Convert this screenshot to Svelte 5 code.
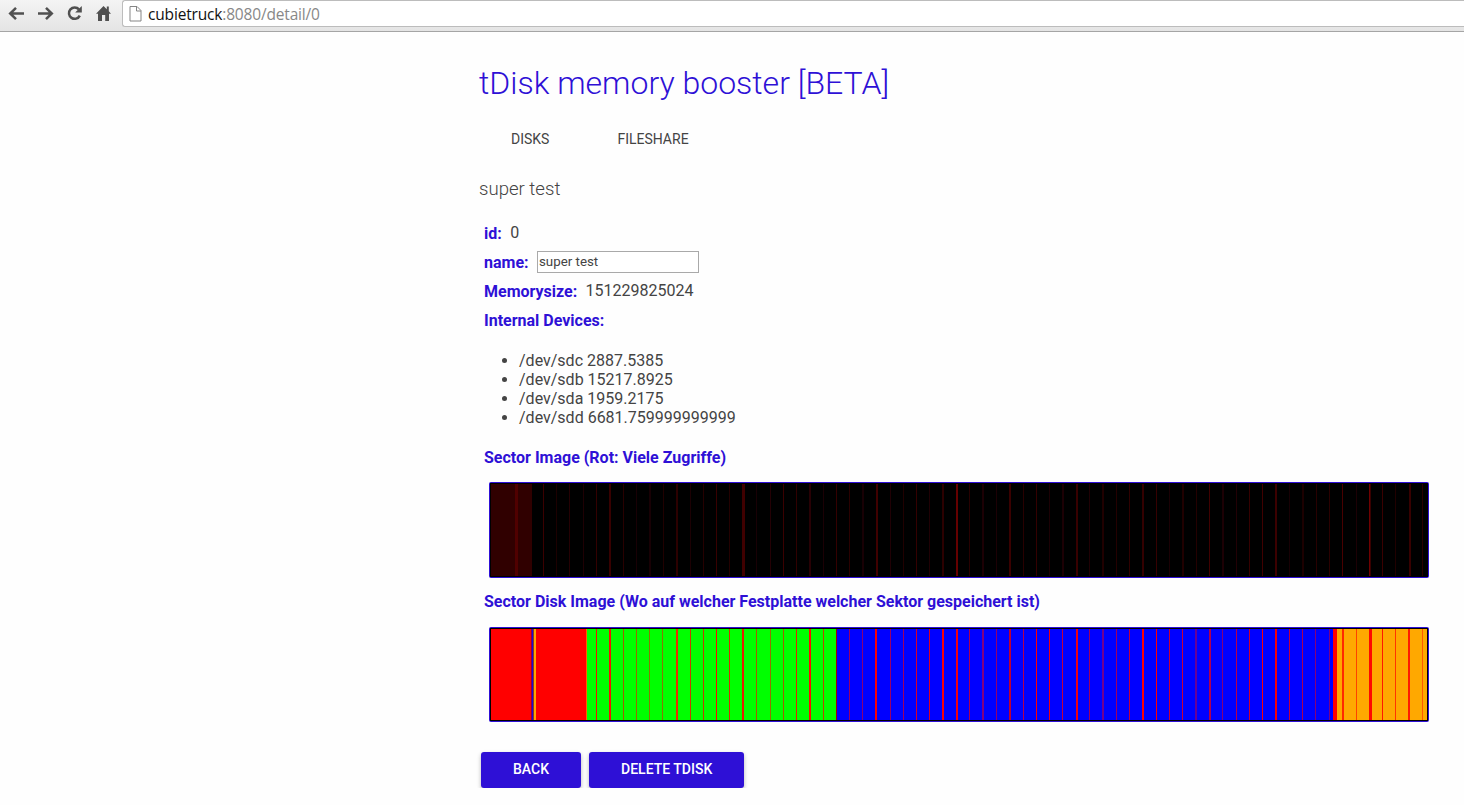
<script>
  let name = $state('super test');
  const devices = [
    '/dev/sdc 2887.5385',
    '/dev/sdb 15217.8925',
    '/dev/sda 1959.2175',
    '/dev/sdd 6681.759999999999',
  ];

  // [x, width, colour] in chart units
  const access = [
    [2, 41, '#300000'], [26, 3, '#500000'], [54, 1, '#3b0000'], [67, 1, '#1c0000'],
    [80, 1, '#250003'], [94, 1, '#1e0003'], [107, 1, '#330000'], [120, 2, '#380000'],
    [134, 1, '#280000'], [147, 1, '#180004'], [160, 2, '#180004'], [174, 1, '#200000'],
    [187, 2, '#2c0000'], [201, 1, '#1c0003'], [214, 1, '#250000'], [227, 1, '#380000'],
    [240, 1, '#240000'], [253, 3, '#400000'], [267, 1, '#180004'], [281, 1, '#240004'],
    [294, 1, '#3a0000'], [307, 1, '#300000'], [320, 2, '#280004'], [334, 1, '#1b0004'],
    [347, 1, '#340000'], [360, 1, '#2a0000'], [373, 2, '#180004'], [387, 2, '#400000'],
    [401, 1, '#200004'], [414, 1, '#200000'], [427, 1, '#340000'], [440, 1, '#200004'],
    [453, 2, '#2c0000'], [467, 2, '#650000'], [480, 1, '#280000'], [493, 2, '#1c0004'],
    [507, 1, '#1c0004'], [520, 2, '#3a0000'], [534, 1, '#280000'], [547, 1, '#340000'],
    [560, 1, '#1c0004'], [573, 2, '#1c0004'], [587, 2, '#380000'], [600, 1, '#200004'],
    [613, 2, '#200000'], [627, 1, '#240000'], [640, 1, '#300000'], [653, 2, '#340000'],
    [667, 1, '#360000'], [680, 1, '#1b0004'], [693, 2, '#200000'], [707, 1, '#240000'],
    [720, 1, '#410000'], [733, 2, '#1c0004'], [747, 1, '#220004'], [760, 1, '#360000'],
    [773, 1, '#400000'], [786, 2, '#3c0000'], [800, 1, '#180004'], [813, 2, '#1c0000'],
    [827, 1, '#280000'], [840, 1, '#2b0000'], [853, 1, '#480000'], [867, 1, '#1c0004'],
    [880, 1, '#700000'], [881, 1, '#380000'], [893, 1, '#3a0000'], [906, 1, '#200000'],
    [920, 2, '#380000'], [933, 1, '#280000'],
  ];

  const areas = [
    [2, 95, '#ff0000'], [42, 1, '#7d005c'], [43, 1, '#1f0ad6'], [44, 1, '#8a3c20'],
    [45, 2, '#ffa500'], [97, 1, '#ff6000'], [98, 249, '#00ff00'], [347, 1, '#a30000'],
    [348, 496, '#0000ff'], [844, 4, '#ff0000'], [848, 90, '#ffa800'],
  ];
  const marks = [
    [107, 1, '#f41100'], [120, 2, '#f41300'], [134, 1, '#a05d00'], [147, 1, '#9a6800'],
    [160, 1, '#8c7600'], [173, 1, '#8c7600'], [187, 2, '#ec2b00'], [201, 1, '#c93b00'],
    [214, 1, '#c33e00'], [227, 1, '#ff0800'], [240, 1, '#d72c00'], [253, 2, '#e81d00'],
    [267, 1, '#a75b00'], [281, 1, '#957000'], [294, 1, '#a35d00'], [307, 1, '#e02500'],
    [320, 2, '#ff0a00'], [334, 1, '#bd4400'],
    [360, 1, '#9b0064'], [373, 1, '#8b0074'], [386, 2, '#fa0005'], [401, 1, '#9b0064'],
    [414, 1, '#a2005c'], [427, 1, '#d7002a'], [440, 1, '#de0021'], [453, 2, '#fa0005'],
    [467, 2, '#f2000b'], [480, 1, '#af0050'], [493, 2, '#810080'], [507, 1, '#93006c'],
    [520, 2, '#bf0030'], [534, 1, '#b8004a'], [547, 1, '#ff0000'], [560, 1, '#ef0010'],
    [573, 1, '#c70038'], [587, 2, '#f0000f'], [600, 1, '#a1005f'], [613, 2, '#710090'],
    [627, 1, '#9f0060'], [640, 1, '#c1003f'], [653, 2, '#ff0000'], [667, 1, '#ff0000'],
    [680, 1, '#c90036'], [693, 1, '#cf0031'], [706, 2, '#670098'], [720, 2, '#b0004f'],
    [733, 1, '#850078'], [747, 1, '#b8004a'], [760, 1, '#d0002e'], [773, 1, '#ff0000'],
    [786, 2, '#f50008'], [800, 1, '#c2003f'], [813, 1, '#ae004e'], [826, 1, '#870078'],
    [840, 1, '#760088'],
    [853, 2, '#ff2900'], [867, 1, '#ff4200'], [880, 3, '#ff0800'], [893, 1, '#ff1700'],
    [906, 1, '#ff3500'], [919, 2, '#ff1b00'], [933, 1, '#ff5500'],
  ];
</script>

{#snippet chart(bars, height, label)}
  <svg class="chart" width="940" {height} viewBox="0 0 940 {height}" shape-rendering="crispEdges" role="img" aria-label={label}>
    <rect width="940" {height} fill="#2e10d6" />
    <rect x="1" y="1" width="938" height={height - 2} fill="#000" />
    {#each bars as [x, w, fill]}
      <rect {x} y="2" width={w} height={height - 4} {fill} />
    {/each}
  </svg>
{/snippet}

<header class="toolbar">
  <svg class="tools" width="122" height="28" viewBox="0 0 122 28" fill="none" stroke="#505050" stroke-width="2.5">
    <path d="M24 13.5H10.5M16 7.8L10.2 13.5L16 19.2" />
    <path d="M38 13.5H51.5M46 7.8L51.8 13.5L46 19.2" />
    <path d="M79 9.4A5.7 5.7 0 1 0 79.8 15.6" />
    <path d="M81.8 6V12.5H75.2Z" fill="#505050" stroke="none" />
    <path d="M103.5 6L96 13.8H98V21H102V15H105.2V21H109V13.8H111L108.8 11.3V6.5H106.8V9.3Z" fill="#505050" stroke="none" />
  </svg>
  <div class="address">
    <svg width="13" height="16" viewBox="0 0 13 16" fill="#fff" stroke="#858585">
      <path d="M1 .5H8L12 4.5V15H1ZM7.5 .5V5H12" />
    </svg>
    <span class="url"><b>cubietruck</b>:8080/detail/0</span>
  </div>
</header>

<main>
  <h1>tDisk memory booster [BETA]</h1>
  <nav><a href="#disks">DISKS</a><a href="#fileshare">FILESHARE</a></nav>
  <h2>super test</h2>

  <section>
    <div class="row"><span class="label">id:</span><span class="value">0</span></div>
    <div class="row"><label class="label" for="name">name:</label><input id="name" bind:value={name} /></div>
    <div class="row"><span class="label">Memorysize:</span><span class="value">151229825024</span></div>
    <div class="row"><span class="label">Internal Devices:</span></div>
    <ul>
      {#each devices as device}<li>{device}</li>{/each}
    </ul>
    <div class="row"><span class="label">Sector Image (Rot: Viele Zugriffe)</span></div>
    {@render chart(access, 96, 'Sector Image')}
    <div class="row second"><span class="label">Sector Disk Image (Wo auf welcher Festplatte welcher Sektor gespeichert ist)</span></div>
    {@render chart([...areas, ...marks], 95, 'Sector Disk Image')}
  </section>

  <footer><button>BACK</button><button>DELETE TDISK</button></footer>
</main>

<style>
  :global(body) {
    background: #fefefe;
    overflow: hidden;
  }
  .toolbar {
    box-sizing: border-box;
    height: 32px;
    display: flex;
    background: linear-gradient(#f4f4f4, #e4e4e4);
    border-bottom: 1px solid #a5a5a5;
  }
  .tools {
    flex: none;
  }
  .address {
    box-sizing: border-box;
    flex: 1;
    height: 27px;
    display: flex;
    align-items: center;
    gap: 6px;
    padding-left: 6px;
    background: #fff;
    border: 1px solid #bcbcbc;
    border-right: 0;
    border-radius: 3px 0 0 3px;
  }
  .url {
    padding-top: 1px;
    font: 15.5px/25px 'Open Sans', sans-serif;
    letter-spacing: -0.17px;
    color: #888;
  }
  .url b {
    font-weight: 400;
    color: #111;
  }
  main {
    padding-left: 479px;
    font-family: Roboto, sans-serif;
    color: #444;
  }
  h1 {
    margin: 0;
    padding-top: 30px;
    font-size: 32px;
    line-height: 42px;
    font-weight: 300;
    color: #2e10d6;
  }
  nav {
    display: flex;
    gap: 68px;
    padding: 25px 0 0 32px;
  }
  nav a {
    color: #444;
    font-size: 14px;
    line-height: 20px;
    text-decoration: none;
  }
  h2 {
    margin: 28px 0 0;
    font-size: 18.6px;
    line-height: 24px;
    font-weight: 300;
  }
  section {
    padding: 18px 0 0 5px;
    font-size: 16px;
  }
  .row {
    height: 29px;
    display: flex;
    align-items: center;
    gap: 8.4px;
  }
  .label {
    font-weight: 700;
    color: #2e10d6;
  }
  .value {
    position: relative;
    top: -1px;
  }
  input {
    box-sizing: border-box;
    width: 162px;
    height: 22px;
    margin-bottom: 2px;
    padding: 1px;
    border: 1px solid #a9a9a9;
    background: #fff;
    color: #444;
    font: 13.33px Roboto, sans-serif;
  }
  ul {
    margin: 16px 0;
    padding-left: 35px;
  }
  li {
    line-height: 19px;
  }
  .chart {
    display: block;
    margin: 10px 0 0 5px;
    border-radius: 2px;
  }
  .second {
    margin: 9px 0 11px;
  }
  .second + .chart {
    margin-top: 0;
  }
  footer {
    display: flex;
    gap: 8px;
    padding: 30px 0 0 2px;
  }
  button {
    height: 36px;
    padding: 0 32px 2px;
    border: 0;
    border-radius: 3px;
    background: #2e10d6;
    color: #fff;
    font: 500 14px Roboto, sans-serif;
    box-shadow: 0 2px 4px rgba(0, 0, 0, 0.28);
  }
</style>
